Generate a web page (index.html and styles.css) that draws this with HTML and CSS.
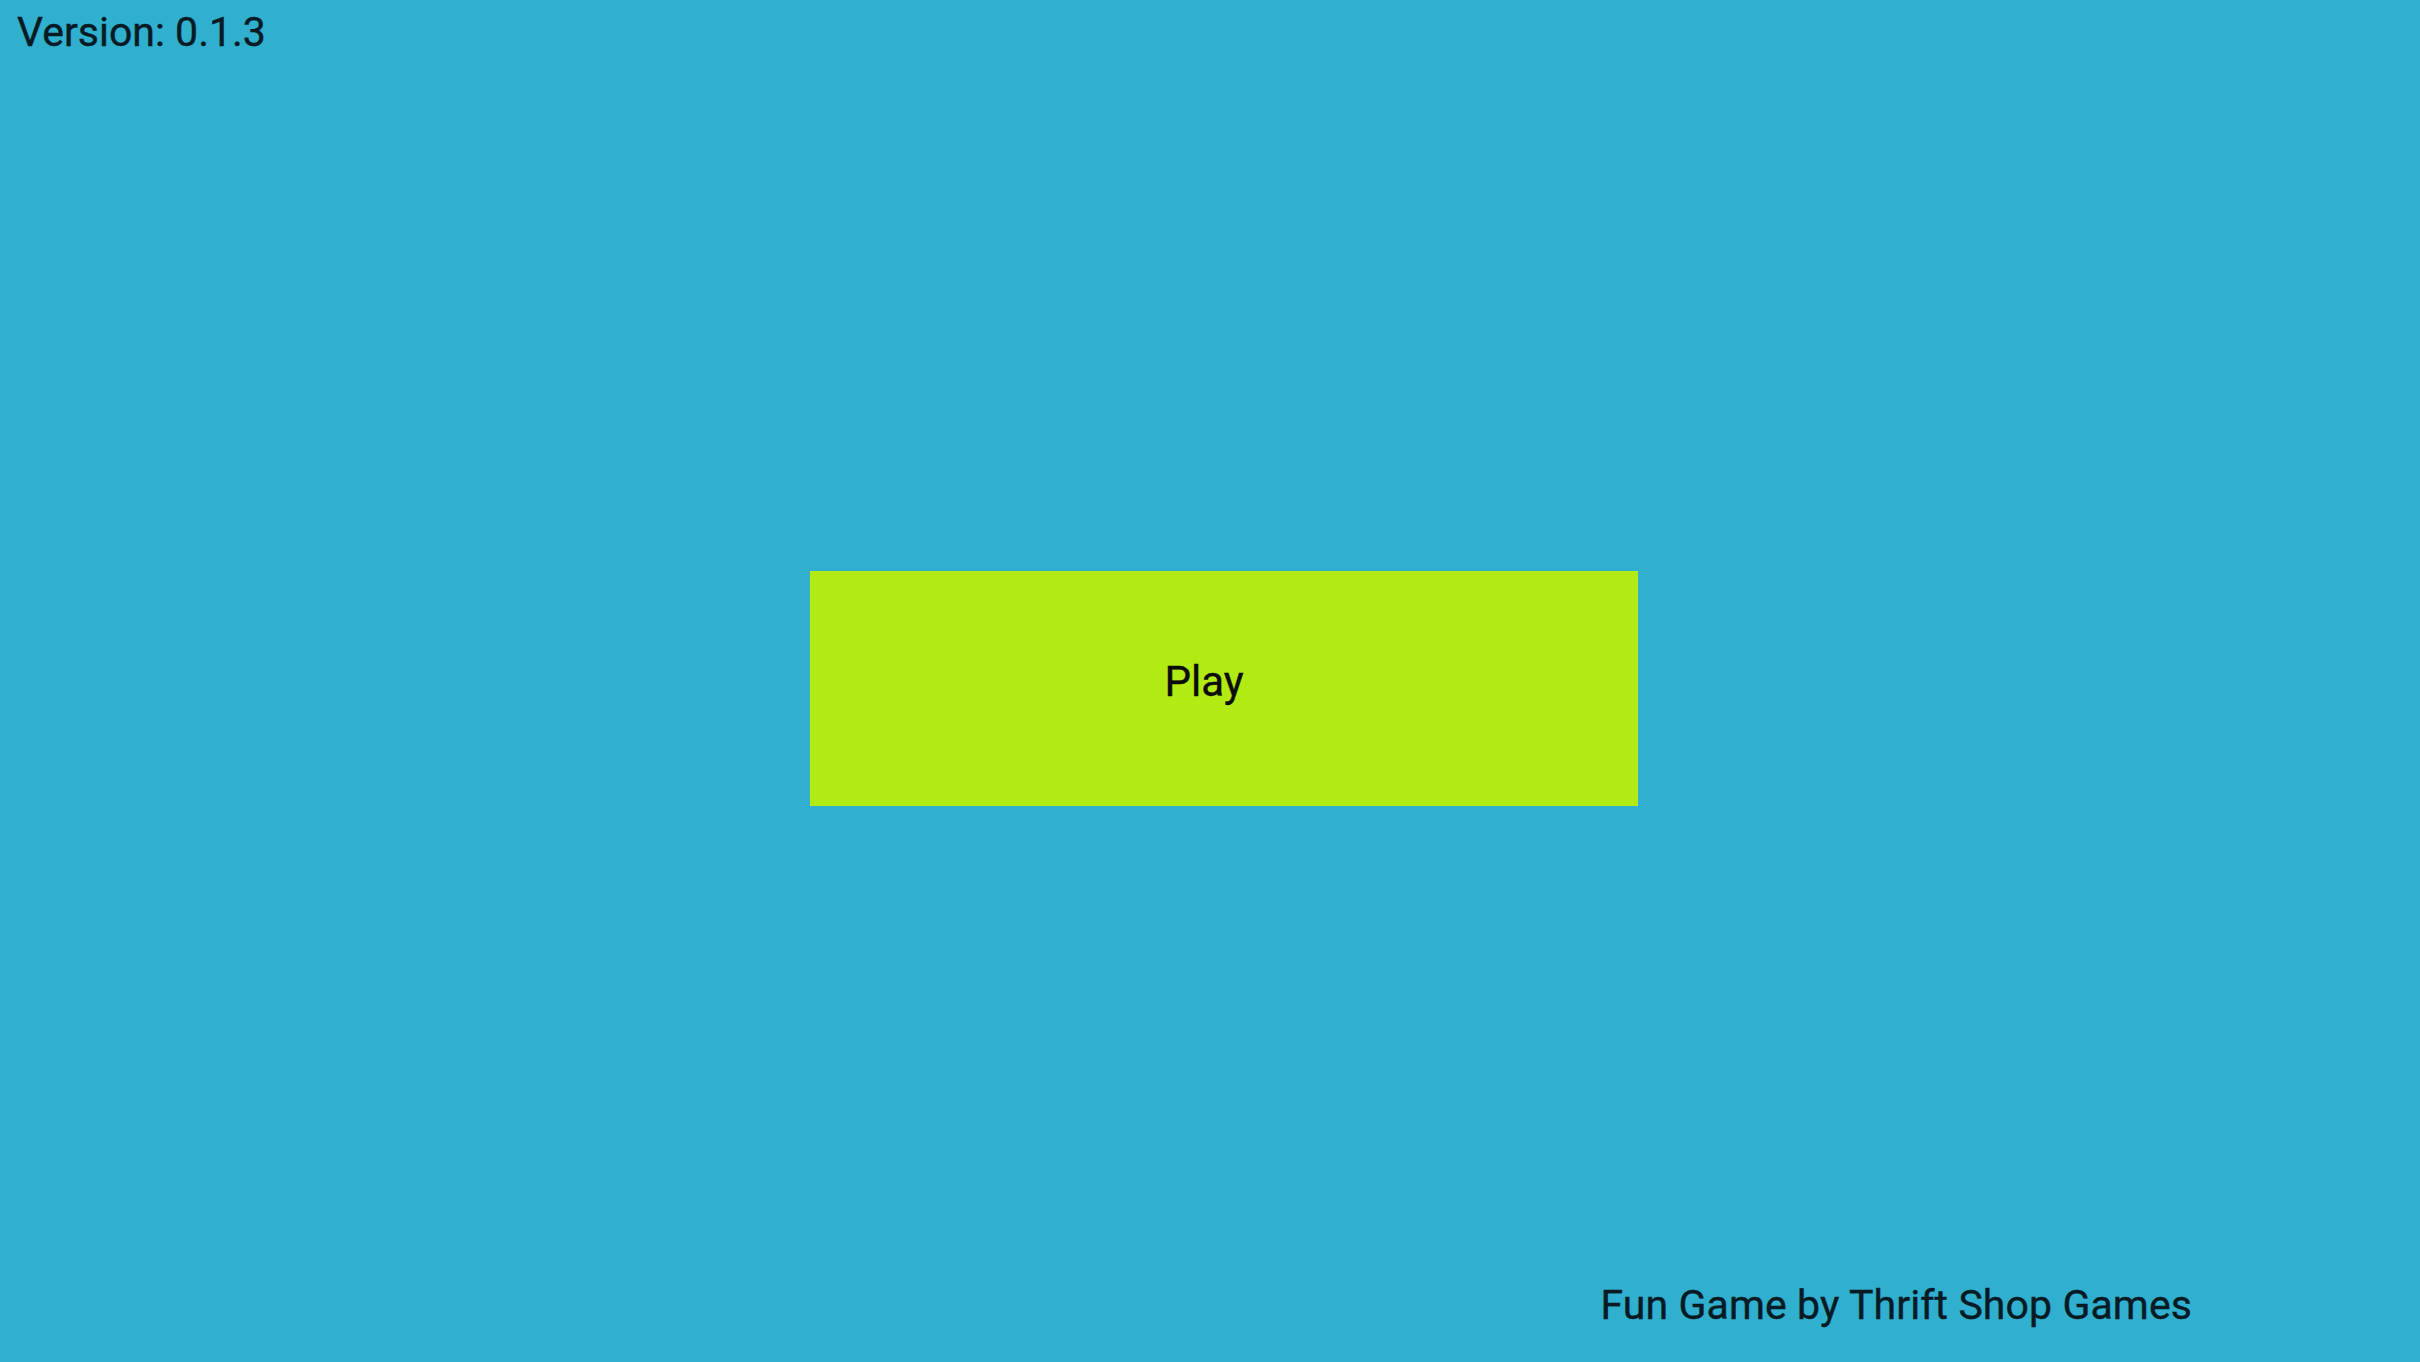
FILE: index.html
```html
<!DOCTYPE html>
<html>
<head>
<meta charset="utf-8">
<link rel="stylesheet" href="styles.css">
</head>
<body>
<div class="screen">
  <div class="version">Version: 0.1.3</div>
  <div class="center">
    <button class="play">Play</button>
  </div>
  <div class="footer">Fun Game by Thrift Shop Games</div>
</div>
</body>
</html>
```
FILE: styles.css
```css
html, body {
  margin: 0;
  padding: 0;
}
body {
  background: #30afce;
  font-family: Roboto, "Liberation Sans", sans-serif;
  color: #081a24;
}
.screen {
  display: flex;
  flex-direction: column;
  height: 1362px;
  overflow: hidden;
}
.version {
  font-size: 41px;
  line-height: 41px;
  padding: 12px 0 0 17px;
  -webkit-text-stroke: 0.4px #081a24;
}
.center {
  flex: 1;
  display: flex;
  align-items: center;
  justify-content: center;
  padding-left: 28px;
  padding-top: 39px;
}
.play {
  width: 828px;
  height: 235px;
  border: none;
  border-radius: 0;
  background: #b2ea14;
  font-family: Roboto, "Liberation Sans", sans-serif;
  font-size: 42px;
  color: #0c0c0c;
  -webkit-text-stroke: 0.4px #0c0c0c;
  padding: 0 40px 14px 0;
  margin: 0;
}
.footer {
  font-size: 41px;
  line-height: 41px;
  text-align: right;
  padding: 0 228px 36px 0;
  letter-spacing: 0.1px;
  -webkit-text-stroke: 0.4px #081a24;
}
```
